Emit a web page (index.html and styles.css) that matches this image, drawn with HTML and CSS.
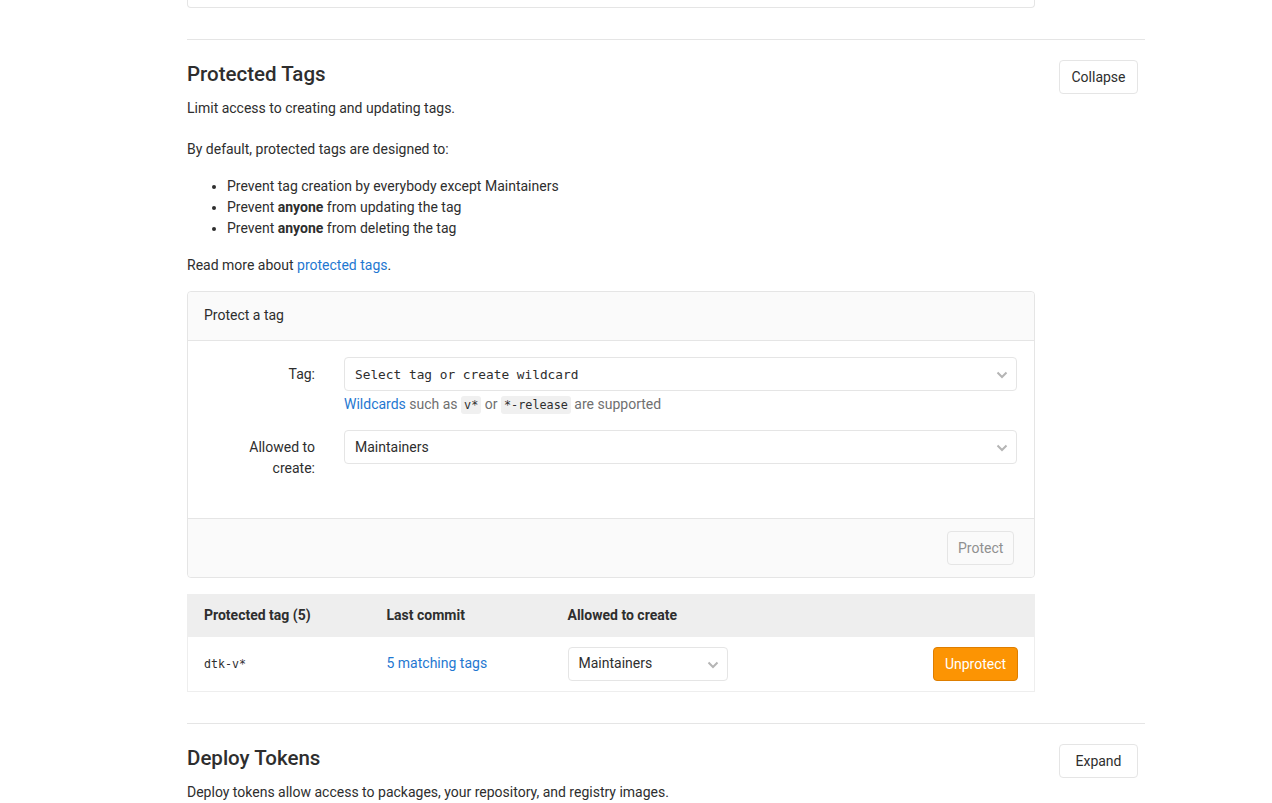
FILE: index.html
```html
<!DOCTYPE html>
<html>
<head>
<meta charset="utf-8">
<link rel="stylesheet" href="styles.css">
</head>
<body>
<div class="page">
  <div class="prev-box"></div>

  <section class="settings">
    <div class="settings-header">
      <div class="header-text">
        <h4>Protected Tags</h4>
        <p class="lead">Limit access to creating and updating tags.</p>
      </div>
      <button class="btn">Collapse</button>
    </div>
    <div class="settings-content">
      <p>By default, protected tags are designed to:</p>
      <ul>
        <li>Prevent tag creation by everybody except Maintainers</li>
        <li>Prevent <strong>anyone</strong> from updating the tag</li>
        <li>Prevent <strong>anyone</strong> from deleting the tag</li>
      </ul>
      <p class="read-more">Read more about <a href="#">protected tags</a>.</p>

      <div class="panel">
        <div class="panel-heading">Protect a tag</div>
        <div class="panel-body">
          <div class="form-row">
            <label class="form-label">Tag:</label>
            <div class="form-field">
              <div class="select mono">
                <span>Select tag or create wildcard</span>
                <svg class="chev" viewBox="0 0 12 8" width="12" height="8"><path d="M1.5 1.5 L6 6 L10.5 1.5" fill="none" stroke="#b5b5b5" stroke-width="2"/></svg>
              </div>
              <div class="help"><a href="#">Wildcards</a> such as <code>v*</code> or <code>*-release</code> are supported</div>
            </div>
          </div>
          <div class="form-row">
            <label class="form-label">Allowed to<br>create:</label>
            <div class="form-field">
              <div class="select">
                <span>Maintainers</span>
                <svg class="chev" viewBox="0 0 12 8" width="12" height="8"><path d="M1.5 1.5 L6 6 L10.5 1.5" fill="none" stroke="#b5b5b5" stroke-width="2"/></svg>
              </div>
            </div>
          </div>
        </div>
        <div class="panel-footer">
          <button class="btn btn-disabled">Protect</button>
        </div>
      </div>

      <table class="tags-table">
        <thead>
          <tr>
            <th class="c1">Protected tag (5)</th>
            <th class="c2">Last commit</th>
            <th class="c3">Allowed to create</th>
            <th class="c4"></th>
          </tr>
        </thead>
        <tbody>
          <tr>
            <td class="c1"><span class="ref">dtk-v*</span></td>
            <td class="c2"><a href="#">5 matching tags</a></td>
            <td class="c3">
              <div class="select select-sm">
                <span>Maintainers</span>
                <svg class="chev" viewBox="0 0 12 8" width="12" height="8"><path d="M1.5 1.5 L6 6 L10.5 1.5" fill="none" stroke="#b5b5b5" stroke-width="2"/></svg>
              </div>
            </td>
            <td class="c4"><button class="btn btn-warning">Unprotect</button></td>
          </tr>
        </tbody>
      </table>
    </div>
  </section>

  <section class="settings">
    <div class="settings-header">
      <div class="header-text">
        <h4>Deploy Tokens</h4>
        <p class="lead">Deploy tokens allow access to packages, your repository, and registry images.</p>
      </div>
      <button class="btn">Expand</button>
    </div>
  </section>
</div>
</body>
</html>
```

FILE: styles.css
```css
* { box-sizing: border-box; }
html, body { margin: 0; padding: 0; background: #fff; }
body {
  font-family: Roboto, "Noto Sans", sans-serif;
  font-size: 14px;
  line-height: 21px;
  color: #2e2e2e;
  overflow: hidden;
}
a { color: #1f78d1; text-decoration: none; }
.page {
  margin-left: 187px;
  width: 958px;
}
.prev-box {
  width: 848px;
  height: 8px;
  border: 1px solid #e5e5e5;
  border-top: none;
  border-radius: 0 0 4px 4px;
}
.settings {
  border-top: 1px solid #e5e5e5;
  margin-top: 31px;
  padding-top: 19px;
}
.settings-header {
  display: flex;
  justify-content: space-between;
  align-items: flex-start;
}
.header-text h4 {
  margin: 0;
  font-size: 20.5px;
  line-height: 30px;
  font-weight: 500;
  color: #2e2e2e;
}
.lead { margin: 9px 0 0; }
.settings-header .btn { margin-top: 1px; margin-right: 7px; width: 79px; }
.settings-content { width: 848px; padding-top: 20px; }
.settings-content p { margin: 0 0 16px; }
.settings-content p.read-more { margin-bottom: 15px; }
.settings-content ul { margin: 0 0 16px; padding-left: 40px; }
.btn {
  font-family: inherit;
  font-size: 14px;
  line-height: 20px;
  padding: 6px 10px;
  background: #fff;
  border: 1px solid #e5e5e5;
  border-radius: 4px;
  color: #2e2e2e;
  height: 34px;
}
.btn-disabled { color: #909090; background: #fafafa; border-color: #e5e5e5; width: 67px; }
.btn-warning { background: #fc9403; border-color: #de7e00; color: #fff; width: 85px; }
.panel {
  border: 1px solid #e5e5e5;
  border-radius: 4px;
  margin-top: 0;
}
.panel-heading {
  background: #fafafa;
  border-bottom: 1px solid #e5e5e5;
  padding: 13px 16px 14px;
  height: 49px;
  border-radius: 4px 4px 0 0;
}
.panel-body { padding: 16px 17px 39px 16px; }
.form-row { display: flex; margin-bottom: 15px; }
.form-row:last-child { margin-bottom: 0; }
.form-label {
  width: 111px;
  text-align: right;
  padding-top: 7px;
  flex: none;
}
.form-field { flex: 1; margin-left: 29px; }
.select {
  position: relative;
  height: 34px;
  border: 1px solid #e5e5e5;
  border-radius: 4px;
  padding: 6px 10px;
  background: #fff;
  display: flex;
  align-items: center;
}
.select .chev { position: absolute; right: 8px; top: 13px; }
.mono { font-family: "DejaVu Sans Mono", monospace; font-size: 12.8px; }
.help { color: #707070; margin-top: 3px; line-height: 20px; }
code {
  font-family: "DejaVu Sans Mono", monospace;
  font-size: 11.8px;
  background: #f0f0f0;
  color: #2e2e2e;
  padding: 2px 3px;
  border-radius: 3px;
}
.panel-footer {
  background: #fafafa;
  border-top: 1px solid #e5e5e5;
  padding: 12px 20px 12px 16px;
  display: flex;
  justify-content: flex-end;
  border-radius: 0 0 4px 4px;
}
.tags-table {
  margin-top: 16px;
  width: 848px;
  border-collapse: collapse;
  border: 1px solid #eee;
}
.tags-table th {
  background: #eee;
  text-align: left;
  font-weight: 700;
  height: 42px;
  padding: 10px 16px;
}
.tags-table td {
  padding: 10px 16px;
  height: 55px;
}
.tags-table .c1 { width: 183px; }
.tags-table .c2 { width: 181px; }
.tags-table .c3 { width: 200px; }
.tags-table .c4 { text-align: right; }
.ref { font-family: "DejaVu Sans Mono", monospace; font-size: 11.6px; }
.select-sm { width: 160px; }
```
